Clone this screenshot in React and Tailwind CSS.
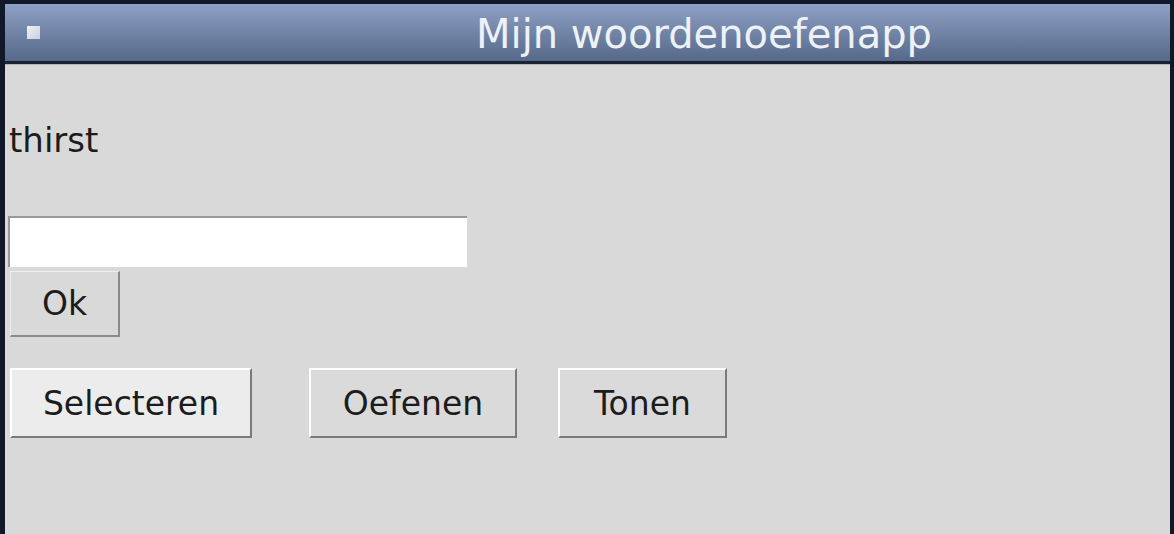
import React from 'react'

function TkButton({ label, width, active }) {
    return (
        <button
            className={`h-[70px] ${width} border-t-2 border-l-2 border-t-white border-l-white border-b-2 border-r-2 border-b-[#7a7a7a] border-r-[#7a7a7a] ${active ? 'bg-[#ececec]' : 'bg-[#dadada]'} text-[33px] leading-none text-[#1c1c1c] flex items-center justify-center`}
        >
            {label}
        </button>
    )
}

export default function App() {
    return (
        <div className="w-[1174px] h-[534px] bg-[#11182a] pt-[4px] pl-[5px] pr-[4px] overflow-hidden flex flex-col font-['DejaVu_Sans',sans-serif]">
            {/* title bar */}
            <div className="h-[57px] shrink-0 bg-gradient-to-b from-[#8ea1c4] to-[#56698b] flex items-center relative">
                <div className="ml-[22px] w-[13px] h-[13px] bg-gradient-to-br from-[#f2f2f6] to-[#c9cfdd]"></div>
                <div className="ml-[436px] text-[40px] leading-none text-[#eef1f6] pt-[3px]">Mijn woordenoefenapp</div>
            </div>
            <div className="h-[3px] shrink-0 bg-[#1b2232]"></div>
            {/* window body */}
            <div className="flex-1 bg-[#d9d9d9] border-t border-t-[#b4b4b4] flex flex-col items-start">
                <div className="mt-[55px] ml-[4px] text-[34px] leading-[40px] text-[#1c1c1c]">thirst</div>
                <div className="mt-[56px] ml-[3px] w-[459px] h-[51px] bg-white border-t-2 border-l-2 border-t-[#9a9a9a] border-l-[#9a9a9a]"></div>
                <button className="mt-[4px] ml-[5px] w-[110px] h-[66px] border-t border-l border-t-[#efefef] border-l-[#efefef] border-b-2 border-r-2 border-b-[#8a8a8a] border-r-[#8a8a8a] bg-[#d9d9d9] text-[33px] leading-none text-[#1c1c1c] flex items-center justify-center">
                    Ok
                </button>
                <div className="mt-[31px] ml-[5px] flex">
                    <TkButton label="Selecteren" width="w-[242px]" active />
                    <div className="ml-[57px]">
                        <TkButton label="Oefenen" width="w-[208px]" />
                    </div>
                    <div className="ml-[41px]">
                        <TkButton label="Tonen" width="w-[169px]" />
                    </div>
                </div>
            </div>
        </div>
    )
}
